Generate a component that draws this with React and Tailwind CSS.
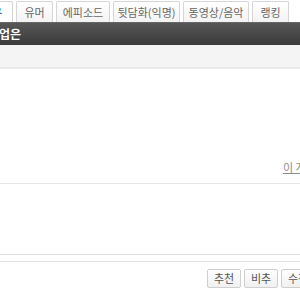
const tabs = [
  { label: "유머", w: "w-[37px]" },
  { label: "에피소드", w: "w-[54px]" },
  { label: "뒷담화(익명)", w: "w-[67px]" },
  { label: "동영상/음악", w: "w-[66px]" },
  { label: "랭킹", w: "w-[37px]" },
];

export default function App() {
  return (
    <div
      className="w-[300px] h-[300px] overflow-hidden bg-white text-[12px]"
      style={{ fontFamily: '"Noto Sans CJK KR", "Noto Sans", sans-serif' }}
    >
      {/* tabs */}
      <div className="flex items-end gap-[3px] h-[22px]">
        <div className="shrink-0 ml-[-40px] w-[53px] h-[21px] flex items-center justify-end pr-[10px] bg-white border border-b-0 border-[#d6d6d6] rounded-t-[2px] text-[#2f6ad3] font-bold leading-none">
          자유
        </div>
        {tabs.map((t) => (
          <div
            key={t.label}
            className={`shrink-0 ${t.w} h-[21px] flex items-center justify-center bg-gradient-to-b from-white to-[#f3f3f3] border border-b-0 border-[#d6d6d6] rounded-t-[2px] text-[#666] text-[11px] leading-none`}
          >
            {t.label}
          </div>
        ))}
      </div>

      {/* title bar */}
      <div className="h-[23px] flex items-center bg-gradient-to-b from-[#575757] to-[#3a3a3a] border-t border-[#666]">
        <span className="ml-[-1px] text-white font-bold text-[12px] leading-none">업은</span>
      </div>

      {/* info band */}
      <div className="h-[24px] bg-[#f4f4f4] border-b-2 border-[#e9e9e9]"></div>

      {/* body */}
      <div className="h-[115px] flex items-end justify-end pb-[10px] border-b border-[#e6e6e6]">
        <span className="mr-[-36px] text-[11px] text-[#8a8a8a] underline leading-none whitespace-nowrap">
          이 게시물을
        </span>
      </div>

      <div className="h-[71px] border-b border-[#e3e3e3]"></div>
      <div className="h-[7px] border-b border-[#e3e3e3]"></div>

      {/* buttons */}
      <div className="flex justify-end gap-[3px] pt-[7px]">
        {["추천", "비추", "수정"].map((b, i) => (
          <button
            key={b}
            className={`shrink-0 w-[34px] h-[19px] flex items-center justify-center bg-gradient-to-b from-white to-[#f0f0f0] border border-[#cfcfcf] rounded-[2px] text-[11px] text-[#555] leading-none ${
              i === 2 ? "mr-[-15px]" : ""
            }`}
          >
            {b}
          </button>
        ))}
      </div>
    </div>
  );
}
